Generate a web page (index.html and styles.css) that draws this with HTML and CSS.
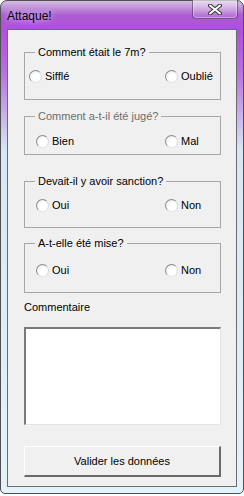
FILE: index.html
```html
<!DOCTYPE html>
<html>
<head>
  <title>Attaque!</title>
  <link rel="stylesheet" href="styles.css">
</head>
<body>

<div class="window">
  <div class="title-bar">
    <span class="title-text">Attaque!</span>
    <div class="close-btn">
      <svg width="14" height="11" viewBox="0 0 14 11">
        <path d="M2 1.5 L12 9.5 M12 1.5 L2 9.5" stroke="#3a3a3a" stroke-width="4" stroke-linecap="round"/>
        <path d="M2 1.5 L12 9.5 M12 1.5 L2 9.5" stroke="#fff" stroke-width="2" stroke-linecap="round"/>
      </svg>
    </div>
  </div>

  <div class="client">
    <fieldset class="group group-first">
      <legend>Comment était le 7m?</legend>
      <div class="row row-wide">
        <label class="option"><span class="radio"></span>Sifflé</label>
        <label class="option"><span class="radio"></span>Oublié</label>
      </div>
    </fieldset>

    <fieldset class="group group-judged">
      <legend class="legend-disabled">Comment a-t-il été jugé?</legend>
      <div class="row">
        <label class="option"><span class="radio"></span>Bien</label>
        <label class="option"><span class="radio"></span>Mal</label>
      </div>
    </fieldset>

    <fieldset class="group group-sanction">
      <legend>Devait-il y avoir sanction?</legend>
      <div class="row">
        <label class="option"><span class="radio"></span>Oui</label>
        <label class="option"><span class="radio"></span>Non</label>
      </div>
    </fieldset>

    <fieldset class="group group-mise">
      <legend>A-t-elle été mise?</legend>
      <div class="row">
        <label class="option"><span class="radio"></span>Oui</label>
        <label class="option"><span class="radio"></span>Non</label>
      </div>
    </fieldset>

    <div class="comment-label">Commentaire</div>
    <div class="comment-box"></div>

    <div class="submit-btn">Valider les données</div>
  </div>
</div>

</body>
</html>
```

FILE: styles.css
```css
body {
  margin: 0;
  background-color: #fff;
  font-family: "Liberation Sans", Arial, sans-serif;
  font-size: 11px;
  color: #000;
}

/* window frame */
.window {
  width: 244px;
  height: 494px;
  box-sizing: border-box;
  border: 1px solid #4e4e55;
  border-radius: 7px 7px 5px 5px;
  padding: 0 6px 6px 6px;
  display: flex;
  flex-direction: column;
  background:
    linear-gradient(to bottom, rgba(255, 255, 255, 0.55), rgba(255, 255, 255, 0) 14px),
    linear-gradient(to bottom, #a66cc4 0px, #b04fdc 28px, #b86ee0 70px, #d6e8f5 150px, #e4f2fa 100%);
}

.title-bar {
  height: 28px;
  display: flex;
  justify-content: space-between;
  align-items: flex-start;
}

.title-text {
  font-family: "Liberation Sans", Arial, sans-serif;
  font-size: 12px;
  margin-top: 8px;
  text-shadow: 0 0 6px rgba(255, 255, 255, 0.9);
}

.close-btn {
  width: 44px;
  height: 18px;
  margin-top: -1px;
  margin-right: -1px;
  border: 1px solid rgba(60, 40, 70, 0.6);
  border-top: none;
  border-radius: 0 0 4px 4px;
  background: linear-gradient(to bottom, rgba(255, 255, 255, 0.45), rgba(255, 255, 255, 0.1));
  box-shadow: inset 0 0 0 1px rgba(255, 255, 255, 0.35);
  display: flex;
  align-items: center;
  justify-content: center;
}

/* client area */
.client {
  flex: 1;
  background-color: #f0f0f0;
  border: 1px solid #6a6a70;
  padding: 15px 15px 0 16px;
  display: flex;
  flex-direction: column;
}

.group {
  margin: 0;
  padding: 0;
  border: 1px solid #a7a7a7;
  min-width: 0;
}

.group legend {
  margin-left: 10px;
  padding: 0 3px;
  line-height: 14px;
}

.legend-disabled {
  color: #6d6d6d;
}

.group-first {
  padding: 10px 0 16px;
}

.group-judged {
  margin-top: 9px;
  padding: 11px 0 6px;
}

.group-sanction {
  margin-top: 19px;
  padding: 10px 0 15px;
}

.group-mise {
  margin-top: 8px;
  padding: 13px 0 15px;
}

.row {
  display: grid;
  grid-template-columns: 129px auto;
  padding-left: 11px;
  line-height: 14px;
}

.row-wide {
  grid-template-columns: 136px auto;
  padding-left: 4px;
}

.option {
  display: flex;
  align-items: center;
}

.radio {
  width: 11px;
  height: 11px;
  border-radius: 50%;
  border: 1px solid #8c8c8c;
  border-right-color: #d8d8d8;
  border-bottom-color: #e4e4e4;
  background: radial-gradient(circle at 60% 60%, #fff 40%, #e2e2e2 100%);
  margin-right: 3px;
}

.comment-label {
  margin-top: 7px;
  line-height: 14px;
}

.comment-box {
  margin-top: 13px;
  height: 95px;
  background-color: #fff;
  border-top: 2px solid #7a7a7a;
  border-left: 2px solid #7a7a7a;
  border-right: 1px solid #e3e3e3;
  border-bottom: 1px solid #e3e3e3;
}

.submit-btn {
  margin-top: 21px;
  height: 28px;
  display: flex;
  align-items: center;
  justify-content: center;
  background-color: #f0f0f0;
  border-top: 1px solid #fff;
  border-left: 1px solid #fff;
  border-right: 2px solid #6a6a6a;
  border-bottom: 2px solid #6a6a6a;
}
```
